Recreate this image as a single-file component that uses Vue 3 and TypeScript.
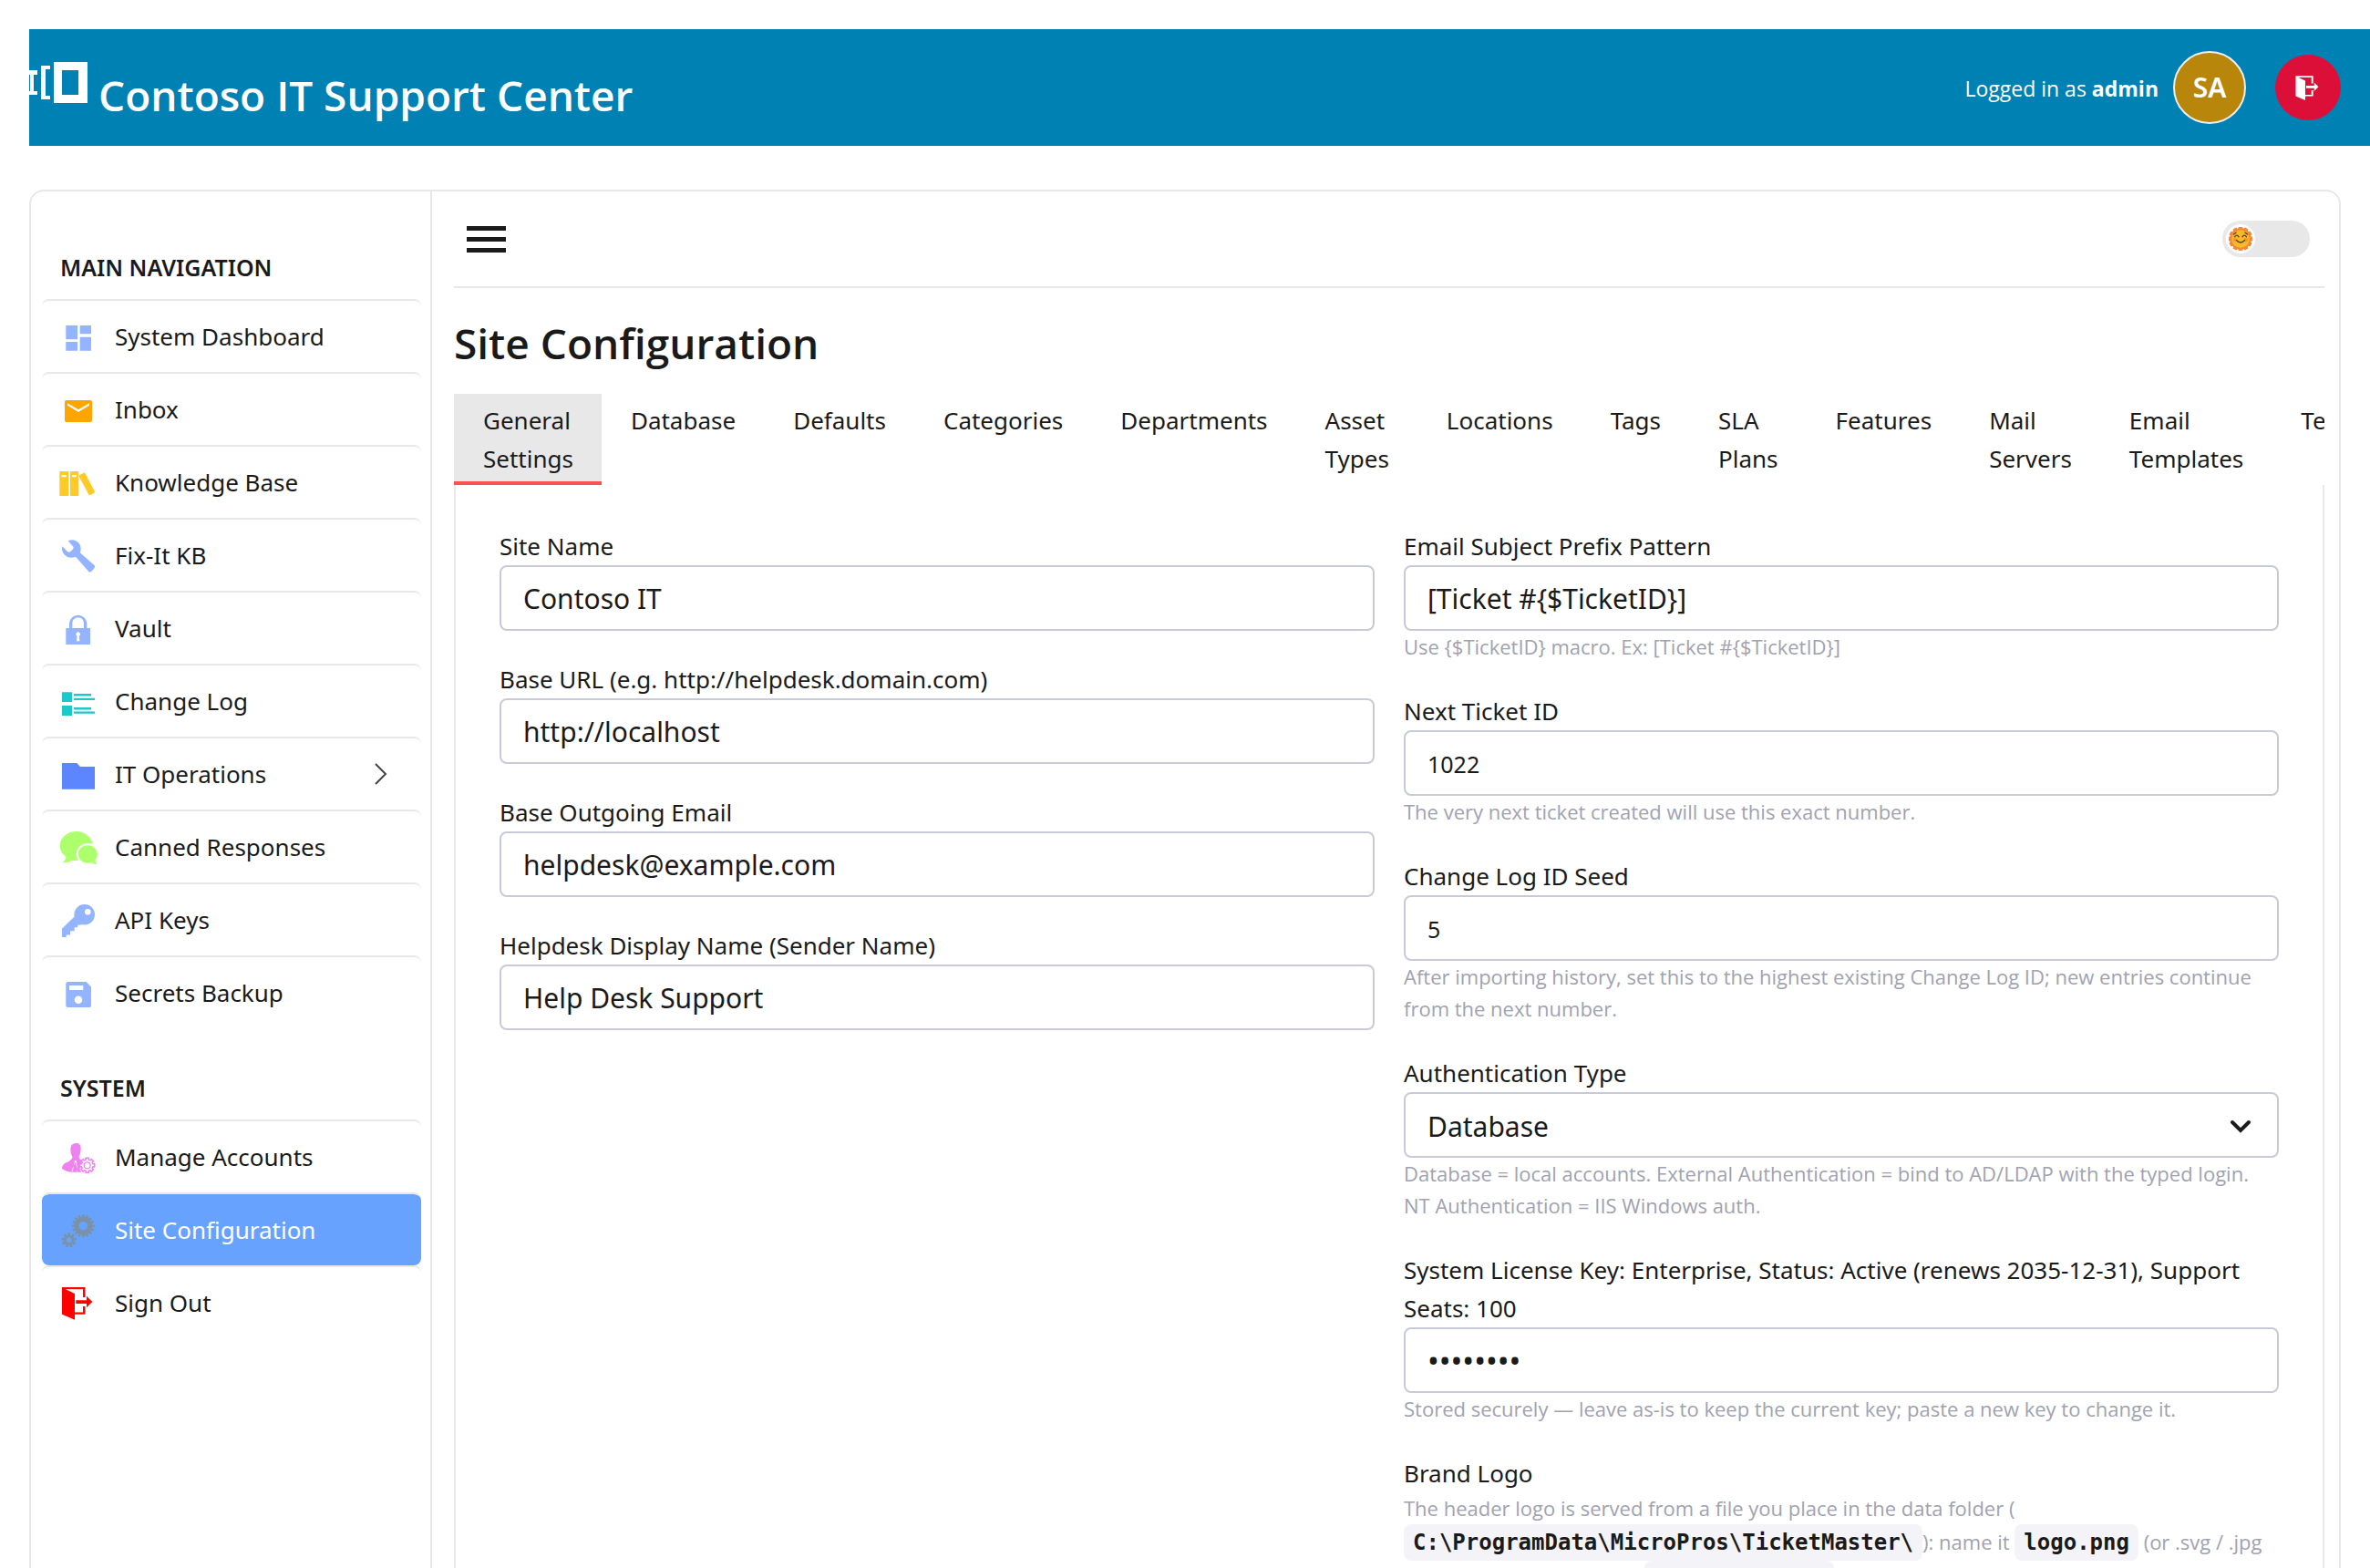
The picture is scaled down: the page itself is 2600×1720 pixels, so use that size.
<script setup lang="ts">
import { ref } from 'vue'

interface NavItem {
  icon: string
  label: string
  color: string
  active?: boolean
  expandable?: boolean
}

interface NavGroup {
  title: string
  items: NavItem[]
}

const groups: NavGroup[] = [
  {
    title: 'MAIN NAVIGATION',
    items: [
      { icon: 'dashboard', label: 'System Dashboard', color: '#94b4ff' },
      { icon: 'mail', label: 'Inbox', color: '#ffa500' },
      { icon: 'library', label: 'Knowledge Base', color: '#ffca28' },
      { icon: 'wrench', label: 'Fix-It KB', color: '#94b4ff' },
      { icon: 'lock', label: 'Vault', color: '#94b4ff' },
      { icon: 'list', label: 'Change Log', color: '#1cc8c8' },
      { icon: 'folder', label: 'IT Operations', color: '#5c85ff', expandable: true },
      { icon: 'chat', label: 'Canned Responses', color: '#adff6b' },
      { icon: 'key', label: 'API Keys', color: '#94b4ff' },
      { icon: 'disk', label: 'Secrets Backup', color: '#94b4ff' },
    ],
  },
  {
    title: 'SYSTEM',
    items: [
      { icon: 'accounts', label: 'Manage Accounts', color: '#ee82ee' },
      { icon: 'gears', label: 'Site Configuration', color: '#7a91aa', active: true },
      { icon: 'exit', label: 'Sign Out', color: '#ff0000' },
    ],
  },
]

const tabs: string[] = [
  'General Settings', 'Database', 'Defaults', 'Categories', 'Departments', 'Asset Types', 'Locations',
  'Tags', 'SLA Plans', 'Features', 'Mail Servers', 'Email Templates', 'Templates',
]
const activeTab = ref(0)

const siteName = ref('Contoso IT')
const baseUrl = ref('http://localhost')
const outgoingEmail = ref('helpdesk@example.com')
const displayName = ref('Help Desk Support')
const subjectPattern = ref('[Ticket #{$TicketID}]')
const nextTicketId = ref('1022')
const changeLogSeed = ref('5')
const authType = ref('Database')
const licenseKey = ref('12345678')
const darkMode = ref(false)

// Outline of a toothed wheel centred on (cx, cy).
function gear(cx: number, cy: number, outer: number, inner: number, teeth: number): string {
  const points: string[] = []
  const step = (Math.PI * 2) / teeth
  const corners: [number, number][] = [[-0.27, outer], [0.27, outer], [0.3, inner], [0.7, inner]]
  for (let i = 0; i < teeth; i++) {
    for (const [offset, radius] of corners) {
      const angle = (i + offset) * step - Math.PI / 2
      points.push(`${(cx + radius * Math.cos(angle)).toFixed(2)} ${(cy + radius * Math.sin(angle)).toFixed(2)}`)
    }
  }
  return `M${points.join('L')}Z`
}

function hole(cx: number, cy: number, r: number): string {
  return `M${cx - r} ${cy}a${r} ${r} 0 1 0 ${2 * r} 0a${r} ${r} 0 1 0 ${-2 * r} 0Z`
}

const exitPath =
  'M2 3H27.500V14H25V5.200H6L16 10V30.500H25V24H27.500V32.700H16V38.700L2 32.700ZM17.300 17.300H29V12.700L35.300 19L29 25.300V21H17.300Z'

const icons: Record<string, string> = {
  dashboard: 'M6.300 8H19V23.300H6.300ZM21.700 8H34V17.300H21.700ZM6.300 26H19V35.700H6.300ZM21.700 20.700H34V35.700H21.700Z',
  mail: 'M7 10H33Q35 10 35 12V32Q35 34 33 34H7Q5 34 5 32V12Q5 10 7 10ZM8 13.200V15.800L20 23L32 15.800V13.200L20 20.300Z',
  library:
    'M0 8H8.500Q9.300 8 9.300 9V34Q9.300 35 8.500 35H0Q-.7 35 -.7 34V9Q-.7 8 0 8ZM1.700 12V14.300H6.700V12ZM11.700 8H19.300Q20.300 8 20.300 9V34Q20.300 35 19.300 35H12Q11 35 11 34V9Q11 8 12 8ZM13 12V14.300H18V12ZM20.800 12.300L27 9.300L38 30.500Q38 31.300 37 32L33 34Q32 34.300 31.300 33.500L20.600 13.500Z',
  wrench:
    'M8.700 4.200C13.500 2 19.500 4 21.700 8.500C23 11.500 23 14.500 21.800 17.300L38 31.500Q38.600 33.300 36.500 35.500Q34.200 38.500 32 38.800L17 21.800C12.500 23.700 8 23 5 19.800C2.300 17 1.300 13 2.400 10.300L8.500 16.600Q10.500 17 12.500 15Q15 13 14.600 11Z',
  lock: 'M6.300 20H10V14.500A9.700 9.700 0 0 1 29.300 14.500V20H33V38H6.300ZM13.300 20H26V14.500A6.300 6.300 0 0 0 13.300 14.500ZM19.700 24.300A2.400 2.400 0 0 0 18.600 28.800L18 34.300H21.400L20.800 28.800A2.400 2.400 0 0 0 19.700 24.300Z',
  list: 'M2 10.300H13V21H2ZM2 25H13V36H2ZM15 12H34V14.500H15ZM15 16.700H38V19H15ZM15 27H34V29.500H15ZM15 31.500H38V33.800H15Z',
  folder: 'M2 8H18.300L22 12H38V36.700H2Z',
  key: `M2 29.700L15.600 16.500A11.300 11.300 0 1 1 24.500 25.300L19.500 25.800L18.800 28.300H15.700V32.300H11V36.500H6.700V39H2Z${hole(30.3, 11.3, 3.3)}`,
  disk: `M9 8H28.500L34 13.500V34Q34 36 32 36H8.300Q6.300 36 6.300 34V10Q6.300 8 8.300 8ZM10 12V17H25.300V12Z${hole(20, 27.7, 4.3)}`,
  gears: `${gear(25.3, 15.7, 12.5, 10, 16)}${hole(25.3, 15.7, 4.8)}${gear(9.7, 31.3, 8.2, 5.8, 9)}${hole(9.7, 31.3, 2.8)}`,
  exit: exitPath,
}

const smallGear = gear(29.7, 29.3, 8.2, 6.4, 8)
const sunRays = gear(13, 13, 13, 11.5, 12)
</script>

<template>
  <div class="page">
    <header class="topbar">
      <div class="brand">
        <svg class="brand-mark" width="64" height="46" viewBox="0 0 64 46" aria-hidden="true">
          <path
            fill="#fff"
            fill-rule="evenodd"
            d="M0 9H9V14H5V32H9V36H0V32H1V14H0ZM13 4H23V8H18V37H23V41H13ZM27 0H64V45H27ZM36 9V36H54V9Z"
          />
        </svg>
        <span class="brand-name">Contoso IT Support Center</span>
      </div>
      <div class="account">
        <span class="signed-in">Logged in as <b>admin</b></span>
        <button class="avatar" type="button">SA</button>
        <button class="logout" type="button" aria-label="Sign out">
          <svg width="30" height="30" viewBox="0 0 40 40" aria-hidden="true">
            <path :d="exitPath" fill="#fff" fill-rule="evenodd" />
          </svg>
        </button>
      </div>
    </header>

    <div class="shell">
      <nav class="sidebar">
        <section v-for="group in groups" :key="group.title" class="nav-group">
          <h2 class="nav-title">{{ group.title }}</h2>
          <a
            v-for="item in group.items"
            :key="item.label"
            href="#"
            class="nav-item"
            :class="{ active: item.active }"
          >
            <svg class="nav-icon" width="40" height="40" viewBox="0 0 40 40" aria-hidden="true">
              <template v-if="item.icon === 'chat'">
                <path
                  :fill="item.color"
                  d="M17.700 3C27.500 3 35.700 10 35.700 19S27.500 35 17.700 35L14 34.700Q8 38 2 37.200Q6 35 6.500 31Q-.3 26 -.3 19C-.3 10 7.700 3 17.700 3Z"
                />
                <ellipse cx="30.300" cy="28" rx="12.500" ry="12" fill="#fff" />
                <path
                  :fill="item.color"
                  d="M30.300 18.300C36 18.300 40.800 22.500 40.800 28Q40.800 32 38.500 34.500Q38.500 37 40.500 39Q37 39.500 34.500 37.300L30.300 37.700C24.500 37.700 19.800 33.500 19.800 28S24.500 18.300 30.300 18.300Z"
                />
              </template>
              <template v-else-if="item.icon === 'accounts'">
                <path
                  :fill="item.color"
                  fill-rule="evenodd"
                  d="M12 8.500Q13 4.500 19 5Q22.800 6 22.700 11Q22.500 17 20.500 19.500Q21 23 24 24L23.500 26Q20.500 28 22 31.500Q20.800 34 23.500 36.700H19.300L16.800 25.500L12.500 35L14 36.700Q7 36.700 2 33Q2 28.500 6 26.500Q12 24.500 13.500 20.500Q11 16 11.300 11ZM16 24L18 24L18.800 36.700H13.500Z"
                />
                <path :d="smallGear" fill="#fff" :stroke="item.color" stroke-width="1.500" stroke-linejoin="round" />
                <circle cx="29.700" cy="29.300" r="3.500" fill="none" :stroke="item.color" stroke-width="1.300" />
              </template>
              <path v-else :d="icons[item.icon]" :fill="item.color" fill-rule="evenodd" />
            </svg>
            <span class="nav-label">{{ item.label }}</span>
            <svg v-if="item.expandable" class="nav-arrow" width="14" height="24" viewBox="0 0 14 24" aria-hidden="true">
              <path d="M1 1L12 12L1 23" fill="none" stroke="#444" stroke-width="2" />
            </svg>
          </a>
        </section>
      </nav>

      <main class="content">
        <div class="toolbar">
          <button class="menu-button" type="button" aria-label="Toggle menu">
            <span></span><span></span><span></span>
          </button>
          <label class="theme">
            <input v-model="darkMode" type="checkbox" aria-label="Dark mode" />
            <span class="knob">
              <svg width="26" height="26" viewBox="0 0 26 26" aria-hidden="true">
                <path :d="sunRays" fill="#f58634" stroke="#f58634" stroke-linejoin="round" />
                <circle cx="13" cy="13" r="9.800" fill="#f6b929" />
                <circle cx="7" cy="14" r="2" fill="#f39232" />
                <circle cx="19" cy="14" r="2" fill="#f39232" />
                <path
                  d="M6.500 10.800Q9 7.500 11 10.800M15 10.800Q17 7.500 19.500 10.800M8.500 14.500Q13 19.500 17.500 14.500M5.500 8L8 6.200M20.500 8L18 6.200"
                  fill="none"
                  stroke="#5a3d2b"
                  stroke-width="1.300"
                  stroke-linecap="round"
                />
              </svg>
            </span>
          </label>
        </div>

        <h1 class="page-title">Site Configuration</h1>

        <div class="tabs" role="tablist">
          <button
            v-for="(tab, index) in tabs"
            :key="index"
            type="button"
            role="tab"
            class="tab"
            :class="{ selected: index === activeTab }"
            :aria-selected="index === activeTab"
            @click="activeTab = index"
          >
            {{ tab }}
          </button>
        </div>

        <form class="panel" @submit.prevent>
          <div class="column">
            <div class="field">
              <label for="site-name">Site Name</label>
              <input id="site-name" v-model="siteName" class="control" type="text" />
            </div>
            <div class="field">
              <label for="base-url">Base URL (e.g. http://helpdesk.domain.com)</label>
              <input id="base-url" v-model="baseUrl" class="control" type="text" />
            </div>
            <div class="field">
              <label for="outgoing">Base Outgoing Email</label>
              <input id="outgoing" v-model="outgoingEmail" class="control" type="text" />
            </div>
            <div class="field">
              <label for="display-name">Helpdesk Display Name (Sender Name)</label>
              <input id="display-name" v-model="displayName" class="control" type="text" />
            </div>
          </div>

          <div class="column">
            <div class="field">
              <label for="subject">Email Subject Prefix Pattern</label>
              <input id="subject" v-model="subjectPattern" class="control" type="text" />
              <p class="hint">Use {$TicketID} macro. Ex: [Ticket #{$TicketID}]</p>
            </div>
            <div class="field">
              <label for="next-id">Next Ticket ID</label>
              <input id="next-id" v-model="nextTicketId" class="control compact" type="text" inputmode="numeric" />
              <p class="hint">The very next ticket created will use this exact number.</p>
            </div>
            <div class="field">
              <label for="seed">Change Log ID Seed</label>
              <input id="seed" v-model="changeLogSeed" class="control compact" type="text" inputmode="numeric" />
              <p class="hint">
                After importing history, set this to the highest existing Change Log ID; new entries continue from the
                next number.
              </p>
            </div>
            <div class="field">
              <label for="auth">Authentication Type</label>
              <div class="select-wrap">
                <select id="auth" v-model="authType" class="control">
                  <option>Database</option>
                  <option>External Authentication</option>
                  <option>NT Authentication</option>
                </select>
                <svg class="select-arrow" width="24" height="16" viewBox="0 0 24 16" aria-hidden="true">
                  <path d="M3 3L12 12L21 3" fill="none" stroke="#1a1a1a" stroke-width="4" stroke-linecap="round" />
                </svg>
              </div>
              <p class="hint">
                Database = local accounts. External Authentication = bind to AD/LDAP with the typed login.
                NT Authentication = IIS Windows auth.
              </p>
            </div>
            <div class="field">
              <label for="license">
                System License Key: Enterprise, Status: Active (renews 2035-12-31), Support Seats: 100
              </label>
              <input id="license" v-model="licenseKey" class="control secret" type="password" autocomplete="off" />
              <p class="hint">Stored securely — leave as-is to keep the current key; paste a new key to change it.</p>
            </div>
            <div class="field">
              <span class="caption">Brand Logo</span>
              <p class="hint">
                The header logo is served from a file you place in the data folder (<code>C:\ProgramData\MicroPros\TicketMaster\</code>): name it <code>logo.png</code> (or .svg / .jpg /&nbsp;.webp), plus an optional <code>logo-dark.png</code>
              </p>
            </div>
          </div>
        </form>
      </main>
    </div>
  </div>
</template>

<style>
body {
  margin: 0;
  background: #fff;
}
</style>

<style scoped>
.page {
  box-sizing: border-box;
  height: 100vh;
  padding: 32px 0 0 32px;
  overflow: hidden;
  font-family: "Noto Sans", "Open Sans", sans-serif;
  font-size: 26px;
  line-height: 42px;
  color: #1a1a1a;
}

.page *,
.page *::before {
  box-sizing: border-box;
}

button,
input,
select {
  font: inherit;
  color: inherit;
}

.topbar {
  display: flex;
  align-items: center;
  justify-content: space-between;
  height: 128px;
  padding-right: 32px;
  background: #0081b4;
  color: #fff;
}

.brand {
  display: flex;
  gap: 12px;
  align-items: center;
}

.brand-mark {
  margin-bottom: 10px;
}

.brand-name {
  padding-top: 16px;
  font-family: "Open Sans", sans-serif;
  font-size: 46px;
  font-weight: 600;
  line-height: 60px;
}

.account {
  display: flex;
  align-items: center;
}

.signed-in {
  padding-top: 2px;
  font-family: "Open Sans", sans-serif;
  font-size: 23px;
}

.avatar {
  width: 80px;
  height: 80px;
  margin: 0 32px 0 16px;
  padding: 0;
  border: 2px solid #eee;
  border-radius: 50%;
  background: #b8860b;
  font-size: 30px;
  font-weight: 600;
}

.logout {
  display: flex;
  align-items: center;
  justify-content: center;
  width: 72px;
  height: 72px;
  padding: 0;
  border: 0;
  border-radius: 50%;
  background: #dc0f38;
}

.shell {
  display: flex;
  min-height: 100vh;
  margin: 48px 32px 0 0;
  border: 2px solid #e8e8e8;
  border-radius: 16px;
}

.sidebar {
  flex: none;
  width: 440px;
  padding: 62px 10px 0 12px;
  border-right: 2px solid #e8e8e8;
}

.nav-group + .nav-group {
  margin-top: 44px;
}

.nav-title {
  margin: 0;
  padding: 0 20px 14px;
  font-size: 25px;
  font-weight: 600;
  line-height: 42px;
}

.nav-item {
  display: flex;
  gap: 20px;
  align-items: center;
  height: 80px;
  padding: 0 37px 0 20px;
  border-top: 2px solid #e8e8e8;
  border-radius: 8px;
  background-clip: padding-box;
  color: inherit;
  text-decoration: none;
}

.nav-item.active {
  background-color: #68a2ff;
  color: #fff;
}

.nav-icon {
  flex: none;
  overflow: visible;
}

.nav-arrow {
  margin-left: auto;
}

.content {
  flex: 1;
  min-width: 0;
  padding: 0 16px 0 24px;
}

.toolbar {
  display: flex;
  align-items: center;
  justify-content: space-between;
  height: 106px;
  padding: 0 16px 0 14px;
  border-bottom: 2px solid #e8e8e8;
}

.menu-button {
  display: flex;
  flex-direction: column;
  gap: 7px;
  width: 43px;
  padding: 0;
  border: 0;
  background: none;
}

.menu-button span {
  height: 5px;
  background: #1a1a1a;
}

.theme {
  position: relative;
  width: 96px;
  height: 40px;
  padding: 4px;
  border-radius: 20px;
  background: #e8e8e8;
}

.theme input {
  position: absolute;
  inset: 0;
  margin: 0;
  opacity: 0;
}

.knob {
  display: flex;
  align-items: center;
  justify-content: center;
  width: 32px;
  height: 32px;
  border-radius: 50%;
  background: #fff;
}

.page-title {
  margin: 30px 0 26px;
  font-family: "Open Sans", sans-serif;
  font-size: 46px;
  font-weight: 600;
  line-height: 60px;
}

.tabs {
  display: flex;
  overflow: hidden;
}

.tab {
  flex: none;
  display: flex;
  align-items: flex-start;
  width: min-content;
  height: 100px;
  padding: 8px 31px 0 32px;
  border: 0;
  border-bottom: 4px solid transparent;
  background: none;
  text-align: left;
}

.tab.selected {
  border-bottom-color: #fa5252;
  background: #e8e8e8;
}

.panel {
  display: grid;
  grid-template-columns: 1fr 1fr;
  gap: 32px;
  padding: 46px 48px 0;
  border: solid #e8e8e8;
  border-width: 0 2px;
}

.column {
  display: flex;
  flex-direction: column;
  gap: 32px;
  min-width: 0;
}

.field label,
.caption {
  display: block;
}

.control {
  display: block;
  width: 100%;
  height: 72px;
  padding: 0 24px;
  border: 2px solid #c8cad8;
  border-radius: 8px;
  background: #fff;
  font-size: 30px;
}

.control.compact {
  padding-top: 2px;
  font-size: 25px;
}

.control.secret {
  font-size: 34px;
}

.select-wrap {
  position: relative;
}

select.control {
  padding-top: 4px;
  appearance: none;
}

.select-arrow {
  position: absolute;
  top: 30px;
  right: 30px;
  pointer-events: none;
}

.hint {
  margin: 0;
  color: #a0a2b0;
  font-family: "Open Sans", sans-serif;
  font-size: 22px;
  line-height: 35px;
}

code {
  display: inline-block;
  padding: 6px 10px;
  border-radius: 8px;
  background: #f4f4f8;
  color: #1a1a1a;
  font-family: "DejaVu Sans Mono", monospace;
  font-size: 24px;
  font-weight: 700;
  line-height: 28px;
}
</style>
